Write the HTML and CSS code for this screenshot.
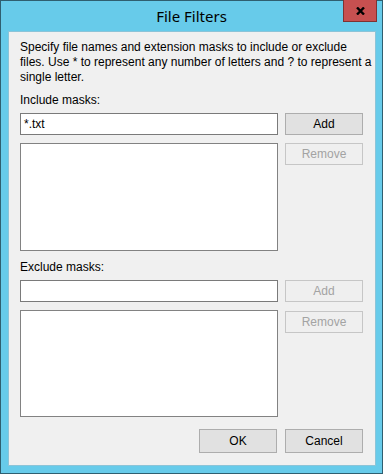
FILE: index.html
```html
<!DOCTYPE html>
<html>
<head>
<meta charset="utf-8">
<link rel="stylesheet" href="styles.css">
</head>
<body>
<div class="window">
  <div class="titlebar">
    <span class="title">File Filters</span>
    <div class="close">
      <svg width="9" height="8" viewBox="0 0 9 8"><path d="M1 0.5 L8 7.5 M8 0.5 L1 7.5" stroke="#000" stroke-width="2.4"/></svg>
    </div>
  </div>
  <div class="client">
    <p class="desc">Specify file names and extension masks to include or exclude<br>files. Use * to represent any number of letters and ? to represent a<br>single letter.</p>
    <div class="label l1">Include masks:</div>
    <div class="grid">
      <div class="input">*.txt</div>
      <div class="btn">Add</div>
      <div class="list big"></div>
      <div class="btn disabled">Remove</div>
    </div>
    <div class="label l2">Exclude masks:</div>
    <div class="grid">
      <div class="input"></div>
      <div class="btn disabled">Add</div>
      <div class="list small"></div>
      <div class="btn disabled r2">Remove</div>
    </div>
    <div class="footer">
      <div class="btn ok">OK</div>
      <div class="btn">Cancel</div>
    </div>
  </div>
</div>
</body>
</html>
```
FILE: styles.css
```css
html, body {
  margin: 0;
  padding: 0;
}
body {
  font-family: "Liberation Sans", Arial, sans-serif;
  font-size: 12px;
  color: #000;
}
.window {
  box-sizing: border-box;
  width: 383px;
  height: 474px;
  background: #67cbea;
  border: 1px solid #2f5f70;
  display: flex;
  flex-direction: column;
}
.titlebar {
  height: 30px;
  display: flex;
  align-items: center;
  justify-content: center;
  position: relative;
}
.title {
  font-family: "Noto Sans", "Liberation Sans", sans-serif;
  font-size: 15px;
  color: #000;
  margin-top: -1px;
}
.close {
  position: absolute;
  top: -1px;
  right: 5px;
  box-sizing: border-box;
  width: 34px;
  height: 22px;
  background: #c75050;
  border: 1px solid #7f3232;
  border-top: none;
  display: flex;
  align-items: center;
  justify-content: center;
}
.close svg {
  display: block;
  margin-top: 1px;
}
.client {
  flex: 1;
  margin: 0 6px 7px 7px;
  background: #f0f0f0;
  box-sizing: border-box;
  border: 1px solid #8bc4d8;
  padding: 8px 12px 0 11px;
}
.desc {
  margin: 0;
  line-height: 15px;
  white-space: nowrap;
}
.label {
  line-height: 15px;
}
.l1 {
  margin-top: 8px;
}
.l2 {
  margin-top: 9px;
}
.grid {
  display: grid;
  grid-template-columns: 258px 78px;
  column-gap: 7px;
  row-gap: 8px;
  margin-top: 5px;
  align-items: start;
}
.input {
  box-sizing: border-box;
  height: 22px;
  background: #fff;
  border: 1px solid #7a7a7a;
  padding: 3px 3px;
  line-height: 14px;
}
.list {
  box-sizing: border-box;
  background: #fff;
  border: 1px solid #828282;
}
.big {
  height: 108px;
}
.small {
  height: 107px;
}
.btn {
  box-sizing: border-box;
  height: 22px;
  background: #e1e1e1;
  border: 1px solid #adadad;
  display: flex;
  align-items: center;
  justify-content: center;
  line-height: 14px;
}
.btn.disabled {
  background: #efefef;
  border-color: #c6c6c6;
  color: #a3a3a3;
}
.r2 {
  margin-top: 1px;
}
.footer {
  display: flex;
  justify-content: flex-end;
  gap: 8px;
  margin-top: 12px;
}
.footer .btn {
  width: 78px;
  height: 24px;
}
```
